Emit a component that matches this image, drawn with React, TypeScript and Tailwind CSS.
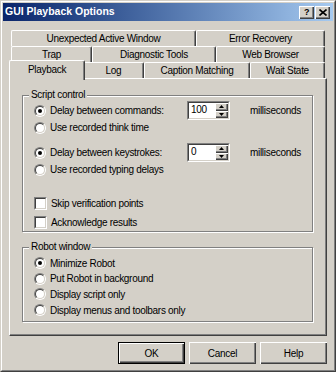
import React from 'react';

const raised =
  'bg-[#d4d0c8] shadow-[inset_1px_1px_0_#ffffff,inset_-1px_-1px_0_#404040,inset_-2px_-2px_0_#808080]';

function Radio({ checked }: { checked?: boolean }) {
  return (
    <span className="flex h-[12px] w-[12px] shrink-0 rounded-full border border-t-[#808080] border-l-[#808080] border-r-white border-b-white">
      <span className="flex flex-1 items-center justify-center rounded-full border border-t-[#404040] border-l-[#404040] border-r-[#d4d0c8] border-b-[#d4d0c8] bg-white">
        {checked && <span className="h-[4px] w-[4px] rounded-full bg-black" />}
      </span>
    </span>
  );
}

function Checkbox() {
  return (
    <span className="flex h-[13px] w-[13px] shrink-0 border border-t-[#808080] border-l-[#808080] border-r-white border-b-white">
      <span className="flex-1 border border-t-[#404040] border-l-[#404040] border-r-[#d4d0c8] border-b-[#d4d0c8] bg-white" />
    </span>
  );
}

function SpinBtn({ up }: { up?: boolean }) {
  return (
    <span className={`flex flex-1 items-center justify-center ${raised}`}>
      <svg width="5" height="3" viewBox="0 0 5 3">
        {up ? <path d="M2.5 0 L5 3 L0 3 Z" fill="#000" /> : <path d="M0 0 L5 0 L2.5 3 Z" fill="#000" />}
      </svg>
    </span>
  );
}

function Spinner({ value }: { value: string }) {
  return (
    <div className="flex h-[19px] w-[43px] shrink-0 border border-t-[#808080] border-l-[#808080] border-r-white border-b-white">
      <div className="flex flex-1 border border-t-[#404040] border-l-[#404040] border-r-[#d4d0c8] border-b-[#d4d0c8] bg-white">
        <span className="flex-1 pl-[2px] leading-[13px]">{value}</span>
        <div className="flex w-[13px] flex-col">
          <SpinBtn up />
          <SpinBtn />
        </div>
      </div>
    </div>
  );
}

function Option({ label, checked, className = '' }: { label: string; checked?: boolean; className?: string }) {
  return (
    <div className={`flex items-center gap-[4px] pl-[11px] ${className}`}>
      <Radio checked={checked} />
      <span>{label}</span>
    </div>
  );
}

function DelayRow({ label, value, className = '' }: { label: string; value: string; className?: string }) {
  return (
    <div className={`flex h-[19px] items-center pl-[11px] ${className}`}>
      <div className="flex w-[153px] items-center gap-[4px]">
        <Radio checked />
        <span>{label}</span>
      </div>
      <Spinner value={value} />
      <span className="ml-[20px]">milliseconds</span>
    </div>
  );
}

function Check({ label, className = '' }: { label: string; className?: string }) {
  return (
    <div className={`flex h-[16px] items-center gap-[4px] pl-[11px] ${className}`}>
      <Checkbox />
      <span>{label}</span>
    </div>
  );
}

function Tab({ label, className = '' }: { label: string; className?: string }) {
  return (
    <div
      className={`flex items-center justify-center rounded-t-[2px] border-t border-l border-r border-t-white border-l-white border-r-[#404040] bg-[#d4d0c8] shadow-[inset_-1px_0_0_#808080] ${className}`}
    >
      {label}
    </div>
  );
}

function Button({ label, isDefault }: { label: string; isDefault?: boolean }) {
  return (
    <button
      className={`flex h-[22px] w-[67px] items-center justify-center ${raised} ${isDefault ? 'border border-black' : ''}`}
    >
      {label}
    </button>
  );
}

export default function App() {
  return (
    <div className="h-[372px] w-[336px] border border-t-[#d4d0c8] border-l-[#d4d0c8] border-r-[#404040] border-b-[#404040] bg-[#d4d0c8] font-['Liberation_Sans',Arial,sans-serif] text-[10px] tracking-[-0.3px] text-black">
      <div className="flex h-full flex-col border border-t-white border-l-white border-r-[#808080] border-b-[#808080] p-[1px]">
        {/* title bar */}
        <div className="flex h-[18px] shrink-0 items-center bg-linear-to-r from-[#0a246a] to-[#a6caf0] pl-[2px] pr-[3px]">
          <span className="text-[10.5px] font-bold tracking-normal text-white">GUI Playback Options</span>
          <div className="ml-auto flex gap-[1px]">
            <span className={`flex h-[13px] w-[15px] items-center justify-center text-[9px] font-bold leading-none ${raised}`}>?</span>
            <span className={`flex h-[13px] w-[15px] items-center justify-center ${raised}`}>
              <svg width="8" height="7" viewBox="0 0 8 7">
                <path d="M0.5 0.5 L7.5 6.5 M7.5 0.5 L0.5 6.5" stroke="#000" strokeWidth="1.6" />
              </svg>
            </span>
          </div>
        </div>

        <div className="ml-[6px] mt-[9px] flex w-[318px] flex-col">
          {/* tab rows */}
          <div className="flex h-[16px] px-[2px]">
            <Tab label="Unexpected Active Window" className="h-[16px] w-[185px]" />
            <Tab label="Error Recovery" className="h-[16px] w-[129px]" />
          </div>
          <div className="flex h-[16px] px-[2px]">
            <Tab label="Trap" className="h-[16px] w-[81px]" />
            <Tab label="Diagnostic Tools" className="h-[16px] w-[124px]" />
            <Tab label="Web Browser" className="h-[16px] w-[109px]" />
          </div>
          <div className="flex h-[16px] items-start px-[2px]">
            <Tab label="Playback" className="relative z-10 -mx-[2px] -mt-[2px] h-[20px] w-[76px] pb-[2px]" />
            <Tab label="Log" className="h-[16px] w-[61px]" />
            <Tab label="Caption Matching" className="h-[16px] w-[106px]" />
            <Tab label="Wait State" className="h-[16px] w-[75px]" />
          </div>

          {/* panel */}
          <div className="flex h-[258px] flex-col border border-t-white border-l-white border-r-[#404040] border-b-[#404040] shadow-[inset_-1px_-1px_0_#808080]">
            <div className="relative ml-[12px] mt-[16px] h-[137px] w-[291px] border border-[#808080] pt-[5px] shadow-[inset_1px_1px_0_#ffffff,1px_1px_0_#ffffff]">
              <span className="absolute -top-[7px] left-[6px] bg-[#d4d0c8] px-[2px] leading-[12px]">Script control</span>
              <DelayRow label="Delay between commands:" value="100" />
              <Option label="Use recorded think time" className="h-[15px]" />
              <DelayRow label="Delay between keystrokes:" value="0" className="mt-[8px]" />
              <Option label="Use recorded typing delays" className="h-[15px]" />
              <Check label="Skip verification points" className="mt-[18px]" />
              <Check label="Acknowledge results" className="mt-[3px]" />
            </div>

            <div className="relative ml-[12px] mt-[15px] h-[75px] w-[291px] border border-[#808080] pt-[7px] shadow-[inset_1px_1px_0_#ffffff,1px_1px_0_#ffffff]">
              <span className="absolute -top-[7px] left-[6px] bg-[#d4d0c8] px-[2px] leading-[12px]">Robot window</span>
              <Option label="Minimize Robot" checked className="h-[16px]" />
              <Option label="Put Robot in background" className="h-[15px]" />
              <Option label="Display script only" className="h-[16px]" />
              <Option label="Display menus and toolbars only" className="h-[16px]" />
            </div>
          </div>

          {/* buttons */}
          <div className="mt-[6px] flex justify-end gap-[4px]">
            <Button label="OK" isDefault />
            <Button label="Cancel" />
            <Button label="Help" />
          </div>
        </div>
      </div>
    </div>
  );
}
